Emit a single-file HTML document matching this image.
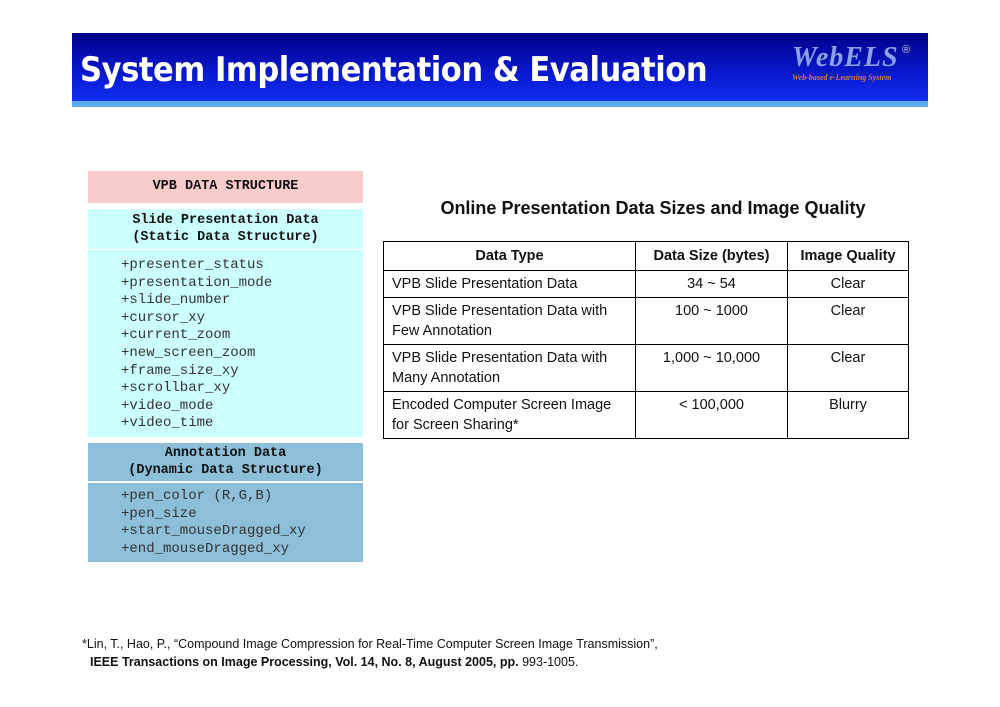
<!DOCTYPE html>
<html><head><style>
body{margin:0;width:1000px;height:707px;background:#fff;position:relative;overflow:hidden;font-family:"Liberation Sans",sans-serif}
.hdr{position:absolute;left:72px;top:33px;width:856px;height:68px;background:linear-gradient(#00008a,#0a1ed8 70%,#1030f0)}
.strip{position:absolute;left:72px;top:101px;width:856px;height:6px;background:#5aa8f0}
.title{position:absolute;left:80px;top:50px;color:#fff;font:bold 34px "DejaVu Sans","Liberation Sans",sans-serif;letter-spacing:-0.5px;transform:scaleX(0.9);transform-origin:0 0;white-space:nowrap}
.logo{position:absolute;left:792px;top:42px;color:#8aa0e8;font:italic bold 28px "Liberation Serif",serif;letter-spacing:1px}
.logo small{position:absolute;left:0;top:31px;font:italic bold 8px "Liberation Serif",serif;color:#e07840;white-space:nowrap;letter-spacing:0}
.reg{position:absolute;left:902px;top:44px;color:#ccd;font-size:11px}
.b{position:absolute;left:88px;width:275px;font-family:"Liberation Mono",monospace;font-size:14px;color:#333}
.c{text-align:center;font-weight:bold;color:#111;line-height:17px;font-size:13.5px}
.l{padding-left:33px;line-height:17.6px}
table{position:absolute;left:383px;top:241px;width:526px;border-collapse:collapse;font-size:14.5px;color:#111}
td{border:1.5px solid #000;padding:3px 8px;vertical-align:top;line-height:20px}
td.m{text-align:center}
th{border:1.5px solid #000;height:26px;font-weight:bold;font-size:14.5px}
.fn{position:absolute;font-size:12.5px;color:#111}
</style></head><body>
<div class="hdr"></div><div class="strip"></div>
<div class="title">System Implementation &amp; Evaluation</div>
<div class="logo">WebELS<small>Web-based e-Learning System</small></div><div class="reg">®</div>
<div class="b c" style="top:171px;height:32px;line-height:32px;background:#f9cccc">VPB DATA STRUCTURE</div>
<div class="b c" style="top:209px;height:40px;padding-top:3px;box-sizing:border-box;background:#ccffff">Slide Presentation Data<br>(Static Data Structure)</div>
<div class="b l" style="top:250px;height:187px;padding-top:7px;box-sizing:border-box;background:#ccffff">+presenter_status<br>+presentation_mode<br>+slide_number<br>+cursor_xy<br>+current_zoom<br>+new_screen_zoom<br>+frame_size_xy<br>+scrollbar_xy<br>+video_mode<br>+video_time</div>
<div class="b c" style="top:443px;height:38px;padding-top:2px;box-sizing:border-box;background:#8dbfd8">Annotation Data<br>(Dynamic Data Structure)</div>
<div class="b l" style="top:483px;height:79px;padding-top:5px;box-sizing:border-box;background:#8dbfd8">+pen_color (R,G,B)<br>+pen_size<br>+start_mouseDragged_xy<br>+end_mouseDragged_xy</div>
<div style="position:absolute;left:383px;width:540px;top:198px;text-align:center;font-weight:bold;font-size:18px;color:#111">Online Presentation Data Sizes and Image Quality</div>
<table>
<tr><th style="width:252px;box-sizing:border-box">Data Type</th><th style="width:152px;box-sizing:border-box">Data Size (bytes)</th><th>Image Quality</th></tr>
<tr><td>VPB Slide Presentation Data</td><td class="m">34 ~ 54</td><td class="m">Clear</td></tr>
<tr><td>VPB Slide Presentation Data with Few Annotation</td><td class="m">100 ~ 1000</td><td class="m">Clear</td></tr>
<tr><td>VPB Slide Presentation Data with Many Annotation</td><td class="m">1,000 ~ 10,000</td><td class="m">Clear</td></tr>
<tr><td>Encoded Computer Screen Image for Screen Sharing*</td><td class="m">&lt; 100,000</td><td class="m">Blurry</td></tr>
</table>
<div class="fn" style="left:82px;top:637px">*Lin, T., Hao, P., “Compound Image Compression for Real-Time Computer Screen Image Transmission”,</div>
<div class="fn" style="left:90px;top:655px"><b>IEEE Transactions on Image Processing, Vol. 14, No. 8, August 2005, pp.</b> 993-1005.</div>
</body></html>
